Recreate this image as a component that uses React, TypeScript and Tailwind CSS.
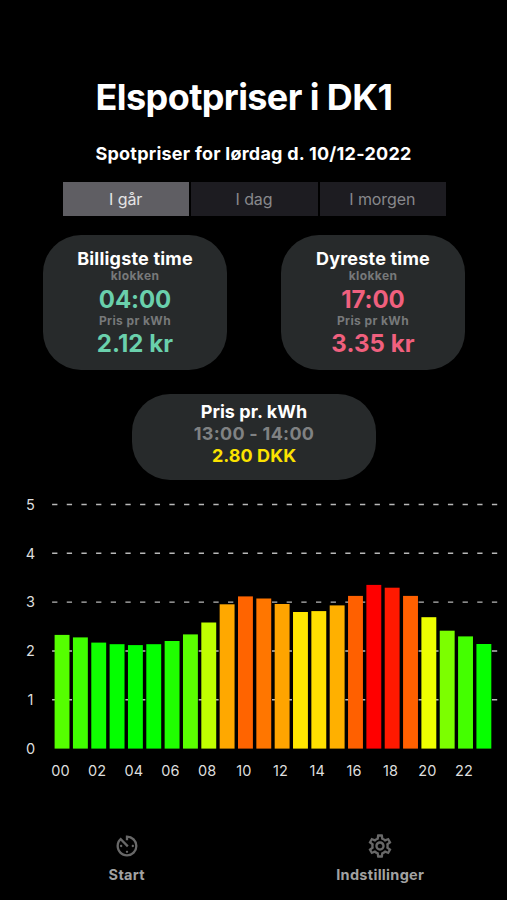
import React from "react";
import { MdAvTimer, MdOutlineSettings } from "react-icons/md";

const BASE = 748.6;
const UNIT = 48.82;
const TOP = 490;

const hours: { top: number; color: string }[] = [
  { top: 634.9, color: "#55ff00" },
  { top: 637.4, color: "#40ff00" },
  { top: 642.6, color: "#10ff00" },
  { top: 644.2, color: "#04ff00" },
  { top: 645.1, color: "#00ff00" },
  { top: 644.2, color: "#04ff00" },
  { top: 641.0, color: "#20ff00" },
  { top: 634.4, color: "#5aff00" },
  { top: 622.5, color: "#c0ff00" },
  { top: 604.3, color: "#ffa800" },
  { top: 596.4, color: "#ff6400" },
  { top: 598.5, color: "#ff7600" },
  { top: 604.0, color: "#ffa400" },
  { top: 612.0, color: "#ffe600" },
  { top: 611.1, color: "#ffe000" },
  { top: 605.4, color: "#ffb000" },
  { top: 595.9, color: "#ff6000" },
  { top: 584.9, color: "#ff0000" },
  { top: 587.7, color: "#ff1900" },
  { top: 595.9, color: "#ff6000" },
  { top: 617.2, color: "#eeff00" },
  { top: 630.7, color: "#7cff00" },
  { top: 636.4, color: "#44ff00" },
  { top: 644.0, color: "#06ff00" },
];

function Tab({ label, active }: { label: string; active?: boolean }) {
  return (
    <button
      className={
        active
          ? "h-[34px] flex-1 bg-[#5f5e63] pr-[1px] text-[16px] leading-[34px] tracking-[-0.1px] text-[#e4e4e6]"
          : "h-[34px] flex-1 bg-[#1d1c21] pr-[1px] text-[16px] leading-[34px] tracking-[-0.1px] text-[#88888c]"
      }
    >
      {label}
    </button>
  );
}

function PriceCard({ title, time, price, tone }: { title: string; time: string; price: string; tone: string }) {
  return (
    <section className="flex h-[135px] w-[184px] flex-col items-center rounded-[38px] bg-[#272a2b] pt-[13px] font-bold whitespace-nowrap">
      <h2 className="h-[22px] text-[18px] leading-[22px] tracking-[0.2px] text-white">{title}</h2>
      <p className="h-[12px] text-[12px] leading-[12px] tracking-[0.4px] text-[#77797a]">klokken</p>
      <p className={`h-[34px] text-[24px] leading-[36px] tracking-[-0.1px] ${tone}`}>{time}</p>
      <p className="h-[10px] text-[12px] leading-[10px] tracking-[0.4px] text-[#77797a]">Pris pr kWh</p>
      <p className={`h-[36px] text-[24px] leading-[36px] tracking-[0.1px] ${tone}`}>{price}</p>
    </section>
  );
}

function Chart() {
  return (
    <svg width="507" height="300" viewBox={`0 ${TOP} 507 300`} className="block shrink-0">
      {[1, 2, 3, 4, 5].map((v) => (
        <line
          key={v}
          x1="52.1"
          x2="498"
          y1={BASE - v * UNIT}
          y2={BASE - v * UNIT}
          stroke="#b8b8b8"
          strokeWidth="1.4"
          strokeDasharray="5.3 9.36"
        />
      ))}
      {hours.map((h, i) => (
        <rect key={i} x={54.6 + i * 18.34} y={h.top} width="14.9" height={BASE - h.top} fill={h.color} />
      ))}
      {[0, 1, 2, 3, 4, 5].map((v) => (
        <text key={v} x="30.5" y={BASE - v * UNIT + 5.2} textAnchor="middle" fontSize="14.5" fill="#dedede">
          {v}
        </text>
      ))}
      {hours.map((_, i) =>
        i % 2 === 0 ? (
          <text
            key={i}
            x={60.5 + i * 18.34}
            y="776.2"
            textAnchor="middle"
            fontSize="14.5"
            fill="#dedede"
            className="tracking-[0.1px]"
          >
            {String(i).padStart(2, "0")}
          </text>
        ) : null,
      )}
    </svg>
  );
}

export default function App() {
  return (
    <div className="flex h-[900px] w-[507px] flex-col overflow-hidden bg-black font-['Inter','Liberation_Sans',sans-serif] text-white">
      <h1 className="mt-[74px] h-[46px] pr-[19px] text-center text-[36px] leading-[46px] font-bold tracking-[-0.6px] whitespace-nowrap">
        Elspotpriser i DK1
      </h1>
      <p className="mt-[22px] h-[24px] text-center text-[18px] leading-[24px] font-bold tracking-[0.24px] whitespace-nowrap">
        Spotpriser for lørdag d. 10/12-2022
      </p>
      <nav className="mt-[16px] ml-[63px] flex w-[383px] gap-[2px]">
        <Tab label="I går" active />
        <Tab label="I dag" />
        <Tab label="I morgen" />
      </nav>
      <div className="mt-[19px] flex justify-between pr-[42px] pl-[43px]">
        <PriceCard title="Billigste time" time="04:00" price="2.12 kr" tone="text-[#6ad0ac]" />
        <PriceCard title="Dyreste time" time="17:00" price="3.35 kr" tone="text-[#f0607e]" />
      </div>
      <section className="mt-[24px] ml-[132px] flex h-[86px] w-[244px] flex-col items-center rounded-[38px] bg-[#272a2b] pt-[7px] text-[18px] leading-[22px] font-bold whitespace-nowrap">
        <h2 className="tracking-[0.05px]">Pris pr. kWh</h2>
        <p className="tracking-[0.28px] text-[#808283]">13:00 - 14:00</p>
        <p className="tracking-[0.05px] text-[#fbe200]">2.80 DKK</p>
      </section>
      <div className="mt-[10px]">
        <Chart />
      </div>
      <footer className="mt-[42px] grid grid-cols-2 text-[#686868]">
        <div className="flex flex-col items-center">
          <MdAvTimer size={28} />
          <span className="mt-[5px] text-[14.5px] leading-[20px] font-bold tracking-[0.3px] text-[#a2a2a2]">
            Start
          </span>
        </div>
        <div className="flex flex-col items-center">
          <MdOutlineSettings size={28} />
          <span className="mt-[5px] text-[14.5px] leading-[20px] font-bold tracking-[0.3px] text-[#a2a2a2]">
            Indstillinger
          </span>
        </div>
      </footer>
    </div>
  );
}
